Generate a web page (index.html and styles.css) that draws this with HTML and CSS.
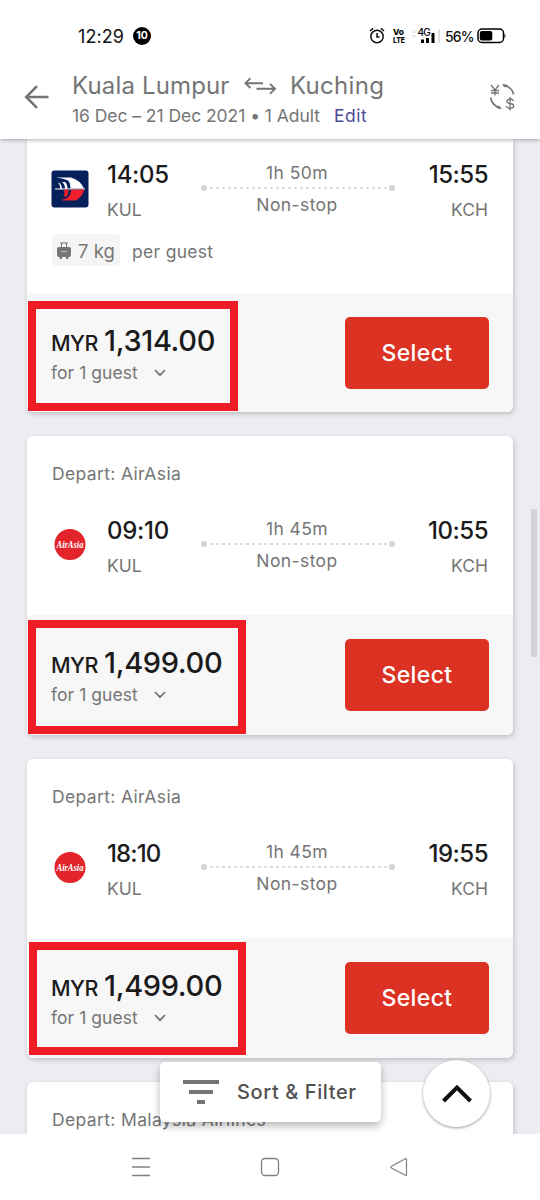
FILE: index.html
```html
<!DOCTYPE html>
<html lang="en">
<head>
<meta charset="utf-8">
<title>Flights: Kuala Lumpur to Kuching</title>
<link rel="stylesheet" href="styles.css">
</head>
<body>
<div class="phone">
  <div class="statusbar">
    <span class="clock">12:29</span>
    <span class="count">10</span>
    <div class="indicators">
      <svg class="alarm" width="16" height="18" viewBox="0 0 16 18" fill="none" stroke="#111" stroke-width="1.5"><circle cx="8" cy="9.5" r="6.2"/><path d="M8 6v4h2.6M1 4l3-2.600M15 4l-3-2.600"/></svg>
      <svg class="volte" width="15" height="22" viewBox="0 0 15 22"><text x="1" y="10" textLength="11" lengthAdjust="spacingAndGlyphs">Vo</text><text x="1" y="18" textLength="12" lengthAdjust="spacingAndGlyphs">LTE</text></svg>
      <svg class="signal" width="28" height="18" viewBox="0 0 28 18"><path d="M0 6l2-2.500 2 2.500zM0 8l2 2.500 2-2.500z" fill="#ddd"/><text x="5.500" y="9" class="g4">4G</text><path d="M9 12.500h3v3.500H9zM14 11h3v5h-3zM19.500 6h3v10h-3z" fill="#000"/><path d="M26 2h2v14h-2z" fill="#ddd"/></svg>
      <span class="percent">56%</span>
      <svg class="battery" width="30" height="16" viewBox="0 0 30 16"><rect x="1" y="1" width="25.500" height="13.500" rx="4" fill="none" stroke="#000" stroke-width="1.500"/><rect x="2.800" y="3" width="12.500" height="9.600" rx="2"/><path d="M27.500 5.500q2 2.300 0 4.600z"/></svg>
    </div>
  </div>
  <header class="header">
    <svg class="back" width="26" height="24" viewBox="0 0 26 24" fill="none" stroke="#757575" stroke-width="2.600"><path d="M24.500 12H2.500M13 1.200L2.200 12 13 22.800"/></svg>
    <div class="trip">
      <div class="route"><span class="from">Kuala Lumpur</span>
        <svg class="swap" width="34" height="20" viewBox="0 0 34 20" fill="none" stroke="#757575" stroke-width="1.900"><path d="M20 7.200H2.500M7.500 2.200l-5 5 5 5M13.500 12.800h18.500M27 7.800l5 5-5 5"/></svg>
        <span class="to">Kuching</span></div>
      <div class="details"><span class="dates">16 Dec – 21 Dec 2021 • 1 Adult</span><a class="edit">Edit</a></div>
    </div>
    <svg class="currency" width="28" height="28" viewBox="0 0 28 28" fill="none" stroke="#757575" stroke-width="1.300"><path d="M2 2l4 5 4-5M6 7v5.500M2 7.500h8M2 10h8"/><path d="M14 2.500q9 1 10.500 9" stroke-width="1.600"/><path d="M13 .8l6 1.200-3 2.600zM13 26.200l-6-1.200 3-2.600z" fill="#757575" stroke="none"/><path d="M1.500 14.500q1.500 8 9.500 10.500" stroke-width="1.600"/><path d="M24.500 18q-1-2-3.500-2t-3.200 2.200q0 1.800 3.400 2.300t3.500 2.500q0 2.300-3.500 2.300T17.300 23M21 14v13.500"/></svg>
  </header>

  <main class="results">
    <article class="card first">
      <div class="body">
        <div class="flight">
          <svg class="logo" width="38" height="38" viewBox="0 0 38 38"><rect x="0.500" y="0.500" width="37" height="37" rx="3" fill="#05205a"/><path d="M5 7.500h15q9 2.500 13 11H19.500q0-7-3.500-8.500Q11 8.300 5 7.500z" fill="#fff"/><path d="M7 12.500q3.500.5 4 6.500H9.500q0-4-2.500-6.500zM11 12h3q2.500 2 2.500 7h-2.500q0-5-3-7zM4 18.500h30v1H4z" fill="#fff"/><path d="M20.500 19.500H33.500q-2 7-8.500 11H11v-.8q8-.7 9.500-10.200zM13 19.500h4.500q0 4-1.500 7h-3.500q1.500-2 .5-7z" fill="#ee2030"/></svg>
          <div class="stop dep"><b>14:05</b><span>KUL</span></div>
          <div class="leg"><span class="dur">1h 50m</span><div class="line"></div><span class="ns">Non-stop</span></div>
          <div class="stop arr"><b>15:55</b><span>KCH</span></div>
        </div>
        <div class="baggage"><span class="chip"><svg width="14" height="18" viewBox="0 0 14 18"><path d="M3 1h8M4.500 1v4M9.500 1v4" fill="none" stroke="#757575"/><rect y="5" width="14" height="10" rx="2" fill="#757575"/><path d="M2.500 14h2.500v3H2.500zM9 14h2.500v3H9z" fill="#757575"/><path d="M4 9.500h6" stroke="#bbb"/></svg><span class="kg">7 kg</span></span><span class="per">per guest</span></div>
      </div>
      <div class="foot">
        <div class="fare"><div class="price"><small>MYR</small><span>1,314.00</span></div><div class="pax"><span>for 1 guest</span><svg width="12" height="8" viewBox="0 0 12 8" fill="none" stroke="#757575" stroke-width="1.800"><path d="M1 1l5 5.200L11 1"/></svg></div></div>
        <button class="select">Select</button>
        <div class="mark mark-a"></div>
      </div>
    </article>

    <article class="card">
      <div class="body">
        <div class="carrier">Depart: AirAsia</div>
        <div class="flight">
          <svg class="logo" width="38" height="38" viewBox="0 0 38 38"><circle cx="19" cy="18.500" r="15.500" fill="#e3242b"/><text x="19" y="22" text-anchor="middle" textLength="27" lengthAdjust="spacingAndGlyphs" class="aa">AirAsia</text></svg>
          <div class="stop dep"><b>09:10</b><span>KUL</span></div>
          <div class="leg"><span class="dur">1h 45m</span><div class="line"></div><span class="ns">Non-stop</span></div>
          <div class="stop arr"><b>10:55</b><span>KCH</span></div>
        </div>
      </div>
      <div class="foot">
        <div class="fare"><div class="price"><small>MYR</small><span>1,499.00</span></div><div class="pax"><span>for 1 guest</span><svg width="12" height="8" viewBox="0 0 12 8" fill="none" stroke="#757575" stroke-width="1.800"><path d="M1 1l5 5.200L11 1"/></svg></div></div>
        <button class="select">Select</button>
        <div class="mark mark-b"></div>
      </div>
    </article>

    <article class="card">
      <div class="body">
        <div class="carrier">Depart: AirAsia</div>
        <div class="flight">
          <svg class="logo" width="38" height="38" viewBox="0 0 38 38"><circle cx="19" cy="18.500" r="15.500" fill="#e3242b"/><text x="19" y="22" text-anchor="middle" textLength="27" lengthAdjust="spacingAndGlyphs" class="aa">AirAsia</text></svg>
          <div class="stop dep"><b class="tight">18:10</b><span>KUL</span></div>
          <div class="leg"><span class="dur">1h 45m</span><div class="line"></div><span class="ns">Non-stop</span></div>
          <div class="stop arr"><b>19:55</b><span>KCH</span></div>
        </div>
      </div>
      <div class="foot">
        <div class="fare"><div class="price"><small>MYR</small><span>1,499.00</span></div><div class="pax"><span>for 1 guest</span><svg width="12" height="8" viewBox="0 0 12 8" fill="none" stroke="#757575" stroke-width="1.800"><path d="M1 1l5 5.200L11 1"/></svg></div></div>
        <button class="select">Select</button>
        <div class="mark mark-c"></div>
      </div>
    </article>

    <article class="card">
      <div class="body"><div class="carrier">Depart: Malaysia Airlines</div></div>
    </article>

    <div class="scrollbar"></div>
    <button class="sort"><svg width="36" height="24" viewBox="0 0 36 24"><path d="M0 0h36v4H0zM6 10h24v4H6zM14 20h8v4h-8z" fill="#757575"/></svg><span>Sort &amp; Filter</span></button>
    <button class="top"><svg width="30" height="19" viewBox="0 0 30 19" fill="none" stroke="#111" stroke-width="4"><path d="M1.500 17L15 3.500 28.500 17"/></svg></button>
  </main>

  <nav class="navbar">
    <svg width="20" height="20" viewBox="0 0 20 20" stroke="#808080" stroke-width="1.400"><path d="M1 1.500h18M1 10h18M1 18.500h18"/></svg>
    <svg width="20" height="20" viewBox="0 0 20 20" fill="none" stroke="#808080" stroke-width="1.300"><rect x="1.500" y="1.500" width="17" height="17" rx="3.500"/></svg>
    <svg width="20" height="20" viewBox="0 0 20 20" fill="none" stroke="#808080" stroke-width="1.200"><path d="M17.500 2.500v15q0 1.200-1.200.7L2.500 11q-1.400-.9 0-1.800L16.300 1.800q1.200-.5 1.200.7z"/></svg>
  </nav>
</div>
</body>
</html>
```
FILE: styles.css
```css
* { box-sizing: border-box; }
body { margin: 0; font-family: Inter, "Liberation Sans", sans-serif; color: #757575; background: #fff; }
button { border: 0; font-family: inherit; padding: 0; }
svg { display: block; flex: none; }
.phone { width: 540px; height: 1200px; display: flex; flex-direction: column; overflow: hidden; background: #fff; }

.statusbar { position: relative; z-index: 3; background: #fff; height: 60px; flex: none; padding: 12px 33px 0 78px; display: flex; align-items: center; color: #111; }
.clock { font-size: 18px; letter-spacing: 0.1px; width: 55px; }
.count { width: 18px; height: 18px; border-radius: 50%; background: #000; color: #fff; font-size: 10.5px; font-weight: 700; line-height: 18px; text-align: center; }
.indicators { margin-left: auto; display: flex; align-items: center; }
.volte { margin-left: 7px; font-size: 8px; font-weight: 800; overflow: visible; }
.signal { margin-left: 5px; }
.g4 { font-size: 10px; font-weight: 500; letter-spacing: -0.8px; }
.percent { margin-left: 5px; font-size: 14px; font-weight: 500; letter-spacing: -0.9px; width: 31px; }
.battery { margin-left: 1px; }

.header { position: relative; z-index: 2; height: 79px; flex: none; display: flex; padding: 10px 23px 0 24px; background: #fff; box-shadow: 0 1px 4px rgba(0,0,0,.3); }
.back { margin-top: 15px; }
.trip { margin-left: 22px; flex: 1; }
.route { display: flex; align-items: center; height: 31px; font-size: 24px; }
.from { width: 171px; letter-spacing: 0.15px; }
.to { margin-left: 13px; letter-spacing: 0.3px; }
.details { display: flex; height: 28px; align-items: center; font-size: 17.500px; white-space: nowrap; }
.dates { width: 262px; letter-spacing: -0.05px; }
.edit { color: #4b4b93; letter-spacing: 0.5px; }
.currency { margin-top: 13px; }

.results { position: relative; height: 995px; flex: none; overflow: hidden; padding: 0 27px; background: #ecedf2; display: flex; flex-direction: column; gap: 24px; }
.card { height: 299px; flex: none; background: #fff; border-radius: 6px; box-shadow: 1px 2px 5px rgba(0,0,0,.2); }
.card.first { height: 273px; border-radius: 0 0 6px 6px; }
.body { height: 179px; padding: 25px 25px 0; }
.first .body { height: 154px; padding-top: 21px; }
.carrier { height: 26px; line-height: 26px; font-size: 17.500px; letter-spacing: 0.36px; margin-bottom: 29px; }
.flight { display: flex; height: 60px; }
.logo { margin: 10px 0 0 -1px; }
.aa { font-family: "Liberation Serif", serif; font-style: italic; font-weight: 700; font-size: 10px; fill: #fff; }
.stop { display: flex; flex-direction: column; width: 96px; }
.dep { margin-left: 18px; }
.arr { width: 96px; align-items: flex-end; }
.stop b { font-size: 24px; line-height: 30px; font-weight: 450; color: #1b1b1b; letter-spacing: -0.3px; }
.arr b { letter-spacing: -0.5px; }
.stop .tight { letter-spacing: -0.9px; }
.stop span { font-size: 17.500px; line-height: 24px; margin-top: 8px; }
.leg { width: 195px; display: flex; flex-direction: column; align-items: center; }
.dep + .leg { margin-left: -1px; }
.leg span { font-size: 17.500px; line-height: 25px; letter-spacing: 0.4px; }
.line { width: 195px; height: 6px; margin: 0 0 1px; background: radial-gradient(circle at 4px 3px, #d5d5d5 2.800px, transparent 3.300px), radial-gradient(circle at 192px 3px, #d5d5d5 2.800px, transparent 3.300px), repeating-linear-gradient(90deg, transparent 0 3px, #ddd 3px 6px) 7px 2px / 181px 2px no-repeat; }
.baggage { margin-top: 14px; display: flex; align-items: center; font-size: 17.500px; }
.chip { width: 68px; height: 32px; border-radius: 4px; background: #f5f5f5; display: flex; align-items: center; padding-left: 5px; }
.chip svg { margin-top: 2px; }
.kg { margin-left: 7px; padding-top: 2px; font-size: 18.500px; white-space: nowrap; }
.per { margin-left: 12px; padding-top: 2px; letter-spacing: 0.3px; }

.foot { position: relative; height: 120px; padding: 24px 24px 0; display: flex; justify-content: space-between; background: #f7f7f7; border-radius: 0 0 6px 6px; }
.first .foot { height: 119px; }
.fare { padding-top: 1px; }
.price { display: flex; align-items: baseline; height: 39px; line-height: 45px; color: #1b1b1b; }
.price small { font-size: 21.500px; width: 53px; font-weight: 450; letter-spacing: -0.5px; }
.price span { font-size: 29px; font-weight: 450; letter-spacing: -0.35px; }
.pax { display: flex; align-items: center; gap: 16px; font-size: 17.500px; height: 32px; line-height: 32px; letter-spacing: 0.05px; }
.select { width: 144px; height: 72px; background: #dc3223; color: #fff; border-radius: 5px; font-size: 23px; font-weight: 500; letter-spacing: 0.4px; }
.mark { position: absolute; border: 8px solid #ee1c24; }
.mark-a { left: 1px; top: 8px; width: 210px; height: 110px; }
.mark-b { left: 1px; top: 5px; width: 218px; height: 114px; }
.mark-c { left: 2px; top: 4px; width: 217px; height: 113px; }

.scrollbar { position: absolute; left: 531px; top: 370px; width: 6px; height: 148px; background: #d3d4d8; }
.sort { position: absolute; left: 160px; top: 923px; width: 221px; height: 60px; background: #fff; border-radius: 5px; box-shadow: 0 4px 9px rgba(0,0,0,.28); display: flex; align-items: center; padding-left: 23px; color: #505050; font-size: 20px; font-weight: 500; letter-spacing: 0.6px; }
.sort span { margin-left: 18px; white-space: nowrap; }
.top { position: absolute; left: 423px; top: 921px; width: 67px; height: 67px; border-radius: 50%; background: #fff; box-shadow: 0 1px 3px rgba(0,0,0,.4); display: flex; align-items: center; justify-content: center; }

.navbar { height: 66px; flex: none; display: flex; justify-content: space-between; align-items: center; padding: 0 131px; background: #fff; }
```
